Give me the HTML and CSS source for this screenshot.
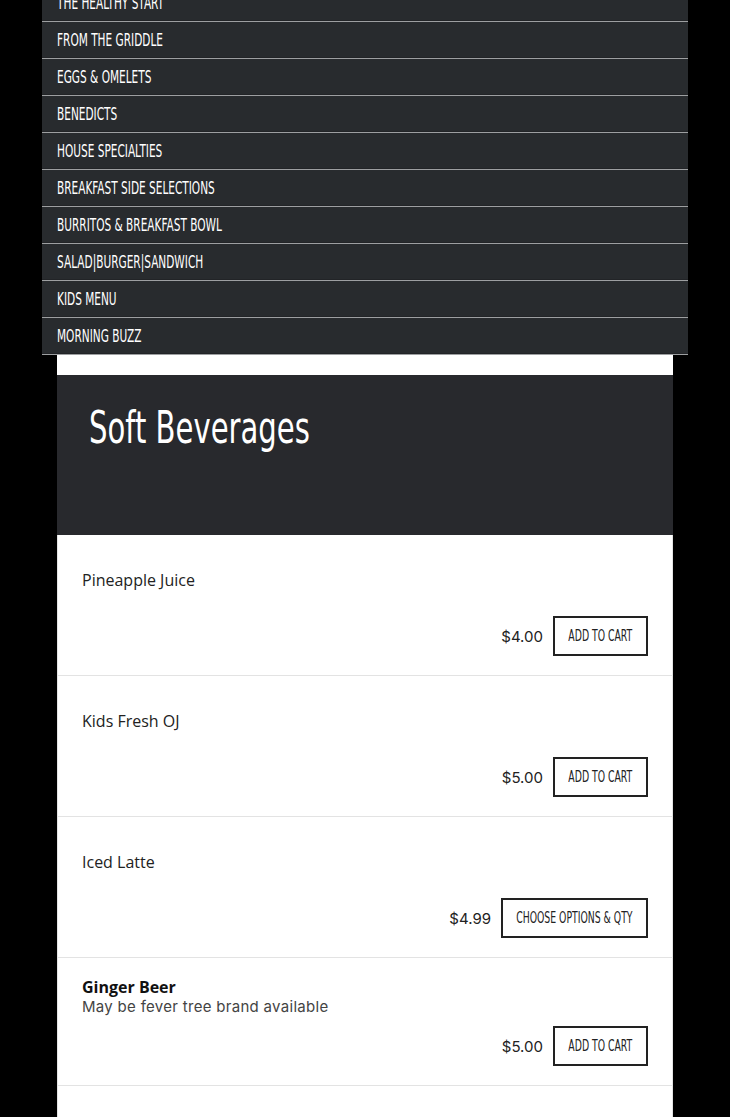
FILE: index.html
```html
<!DOCTYPE html>
<html lang="en">
<head>
<meta charset="utf-8">
<title>Soft Beverages</title>
<link rel="stylesheet" href="styles.css">
</head>
<body>
<div class="page">
  <nav class="menu">
    <a class="menu-item" href="#"><span class="cond">THE HEALTHY START</span></a>
    <a class="menu-item" href="#"><span class="cond">FROM THE GRIDDLE</span></a>
    <a class="menu-item" href="#"><span class="cond">EGGS &amp; OMELETS</span></a>
    <a class="menu-item" href="#"><span class="cond">BENEDICTS</span></a>
    <a class="menu-item" href="#"><span class="cond">HOUSE SPECIALTIES</span></a>
    <a class="menu-item" href="#"><span class="cond">BREAKFAST SIDE SELECTIONS</span></a>
    <a class="menu-item" href="#"><span class="cond">BURRITOS &amp; BREAKFAST BOWL</span></a>
    <a class="menu-item" href="#"><span class="cond">SALAD|BURGER|SANDWICH</span></a>
    <a class="menu-item" href="#"><span class="cond">KIDS MENU</span></a>
    <a class="menu-item" href="#"><span class="cond">MORNING BUZZ</span></a>
  </nav>

  <main class="content">
    <header class="category-header">
      <h1 class="category-title"><span class="cond cond--title">Soft Beverages</span></h1>
    </header>

    <section class="item">
      <div class="item-info item-info--tall">
        <h2 class="item-name">Pineapple Juice</h2>
      </div>
      <div class="item-actions">
        <span class="price">$4.00</span>
        <button class="btn"><span class="cond">ADD TO CART</span></button>
      </div>
    </section>

    <section class="item">
      <div class="item-info item-info--tall">
        <h2 class="item-name">Kids Fresh OJ</h2>
      </div>
      <div class="item-actions">
        <span class="price">$5.00</span>
        <button class="btn"><span class="cond">ADD TO CART</span></button>
      </div>
    </section>

    <section class="item">
      <div class="item-info item-info--tall">
        <h2 class="item-name">Iced Latte</h2>
      </div>
      <div class="item-actions">
        <span class="price">$4.99</span>
        <button class="btn btn--wide"><span class="cond">CHOOSE OPTIONS &amp; QTY</span></button>
      </div>
    </section>

    <section class="item">
      <div class="item-info">
        <h2 class="item-name item-name--bold">Ginger Beer</h2>
        <p class="item-desc">May be fever tree brand available</p>
      </div>
      <div class="item-actions">
        <span class="price">$5.00</span>
        <button class="btn"><span class="cond">ADD TO CART</span></button>
      </div>
    </section>

    <section class="item item--last"></section>
  </main>
</div>
</body>
</html>
```

FILE: styles.css
```css
html, body {
  margin: 0;
  padding: 0;
  background: #000;
}

.page {
  margin-top: -15px;
}

.cond {
  display: inline-block;
  font-family: "DejaVu Sans Condensed", "DejaVu Sans", sans-serif;
  transform: scaleX(0.69);
  transform-origin: left center;
  white-space: nowrap;
}

.cond--title {
  transform: scaleX(0.735);
}

/* Category navigation */
.menu {
  width: 646px;
  margin: 0 auto;
  display: flex;
  flex-direction: column;
}

.menu-item {
  display: block;
  height: 36px;
  line-height: 36px;
  padding-left: 15px;
  background: #282b2e;
  border-bottom: 1px solid #9d9fa1;
  box-shadow: inset 0 -1px 0 #222427;
  color: #fff;
  text-decoration: none;
  font-size: 17px;
  font-weight: normal;
}

/* Content column */
.content {
  width: 616px;
  margin: 0 auto;
  background: #fff;
  padding-top: 20px;
}

.category-header {
  height: 160px;
  background: #28292d;
  padding: 27px 32px 0;
  box-sizing: border-box;
}

.category-title {
  margin: 0;
  color: #fff;
  font-size: 44px;
  line-height: 52px;
  font-weight: normal;
}

.item {
  padding: 20px 24px 19px;
  border: 1px solid #e3e3e3;
  border-top: none;
  background: #fff;
}

.item--last {
  height: 60px;
  padding: 0;
}

.item-info {
  display: flex;
  flex-direction: column;
  justify-content: center;
}

.item-info--tall {
  min-height: 51px;
}

.item-name {
  margin: 0;
  font-family: "Open Sans", sans-serif;
  font-size: 16px;
  font-weight: normal;
  line-height: 19px;
  color: #222;
}

.item-name--bold {
  font-weight: bold;
  font-size: 16px;
  color: #111;
}

.item-desc {
  margin: 0;
  font-family: Inter, "DejaVu Sans", sans-serif;
  font-size: 15px;
  letter-spacing: 0.3px;
  line-height: 19px;
  color: #444;
}

.item-actions {
  margin-top: 10px;
  display: flex;
  justify-content: flex-end;
  align-items: center;
  gap: 10px;
}

.price {
  font-family: Inter, "DejaVu Sans", sans-serif;
  font-size: 15px;
  color: #222;
}

.btn {
  width: 95px;
  height: 40px;
  box-sizing: border-box;
  border: 2px solid #222;
  background: #fff;
  color: #222;
  padding: 0;
  display: flex;
  align-items: center;
  justify-content: center;
  font-size: 15px;
  cursor: pointer;
}

.btn--wide {
  width: 147px;
}

.btn .cond {
  transform-origin: center center;
}
```
